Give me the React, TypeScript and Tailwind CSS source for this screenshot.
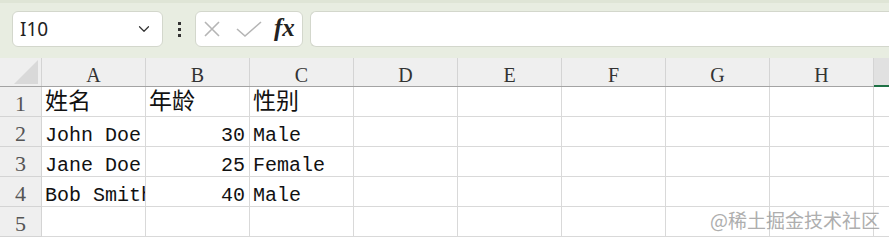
import { ChevronDown } from 'lucide-react';

const cols = ['A', 'B', 'C', 'D', 'E', 'F', 'G', 'H'];

type Cell = { text: string; align?: 'left' | 'right'; cjk?: boolean };

const rows: Cell[][] = [
  [{ text: '姓名', cjk: true }, { text: '年龄', cjk: true }, { text: '性别', cjk: true }],
  [{ text: 'John Doe' }, { text: '30', align: 'right' }, { text: 'Male' }],
  [{ text: 'Jane Doe' }, { text: '25', align: 'right' }, { text: 'Female' }],
  [{ text: 'Bob Smith' }, { text: '40', align: 'right' }, { text: 'Male' }],
  [],
];

const mono = { fontFamily: '"Liberation Mono", "Noto Sans CJK SC", monospace' };
const serif = { fontFamily: '"Liberation Serif", "Noto Sans CJK SC", serif' };

function Toolbar() {
  return (
    <div className="h-[58px] bg-[#e8ede1] border-t-[3px] border-[#dfe5d6] flex items-start pt-[8px]">
      {/* name box */}
      <div className="ml-[12px] w-[151px] h-[36px] rounded-md border border-[#d3d7cc] bg-white flex items-center justify-between pl-[7px] pr-[9px]">
        <span className="text-[19px] text-[#222]" style={{ fontFamily: '"Noto Sans", sans-serif' }}>I10</span>
        <ChevronDown size={18} strokeWidth={1.6} className="text-[#333]" />
      </div>
      {/* dots */}
      <div className="w-[32px] h-[36px] flex flex-col items-center justify-center gap-[3px]">
        <span className="w-[3px] h-[3px] bg-[#333]" />
        <span className="w-[3px] h-[3px] bg-[#333]" />
        <span className="w-[3px] h-[3px] bg-[#333]" />
      </div>
      {/* buttons */}
      <div className="w-[108px] h-[36px] rounded-md border border-[#d3d7cc] bg-white flex items-center pl-[7px]">
        <svg width="18" height="18" viewBox="0 0 18 18" className="mr-[15px]">
          <path d="M2 2 L16 16 M16 2 L2 16" stroke="#b5b5b5" strokeWidth="1.6" fill="none" />
        </svg>
        <svg width="26" height="18" viewBox="0 0 26 18" className="mr-[12px]">
          <path d="M1 9 L9 16 L25 2" stroke="#b5b5b5" strokeWidth="1.6" fill="none" />
        </svg>
        <span className="text-[25px] italic font-semibold text-[#222] leading-none -mt-[3px]" style={{ fontFamily: '"Liberation Serif", serif' }}>fx</span>
      </div>
      {/* formula bar */}
      <div className="ml-[7px] flex-1 h-[36px] rounded-l-md border border-r-0 border-[#d3d7cc] bg-white" />
    </div>
  );
}

function HeaderRow() {
  return (
    <div className="flex h-[29px] bg-[#efefef] border-b border-[#a3a3a3]">
      <div className="w-[42px] shrink-0 border-r border-[#d4d4d4] relative">
        <svg width="24" height="24" viewBox="0 0 24 24" className="absolute right-[3px] bottom-[2px]">
          <path d="M24 0 L24 24 L0 24 Z" fill="#d9d9d9" />
        </svg>
      </div>
      {cols.map((c) => (
        <div
          key={c}
          className="w-[104px] shrink-0 border-r border-[#d4d4d4] flex items-center justify-center text-[20px] text-[#333] pt-[5px]"
          style={serif}
        >
          {c}
        </div>
      ))}
      <div className="flex-1 bg-[#e1e1e1] border-b-2 border-[#1e7145] -mb-[1px]" />
    </div>
  );
}

function GridRow({ n, cells }: { n: number; cells: Cell[] }) {
  return (
    <div className="flex h-[30px]">
      <div
        className="w-[42px] shrink-0 bg-[#efefef] border-r border-b border-[#d4d4d4] flex items-end justify-center pb-[1px] text-[22px] text-[#555] leading-none"
        style={serif}
      >
        <span>{n}</span>
      </div>
      {cols.map((c, i) => {
        const cell = cells[i];
        return (
          <div
            key={c}
            className={`w-[104px] shrink-0 border-r border-b border-[#d9d9d9] flex items-end overflow-hidden whitespace-nowrap leading-none text-[#111] ${
              cell?.align === 'right' ? 'justify-end pr-[4px]' : 'justify-start pl-[3px]'
            } ${cell?.cjk ? 'text-[23px] pb-[1px]' : 'text-[20px] pb-[0px]'}`}
            style={mono}
          >
            {cell?.text}
          </div>
        );
      })}
      <div className="flex-1 border-b border-[#d9d9d9]" />
    </div>
  );
}

export default function App() {
  return (
    <div className="w-[889px] h-[240px] overflow-hidden bg-white relative">
      <Toolbar />
      <HeaderRow />
      {rows.map((r, i) => (
        <GridRow key={i} n={i + 1} cells={r} />
      ))}
      {/* watermark */}
      <div
        className="absolute right-[9px] bottom-[6px] text-[19px] text-[#9a9a9a] opacity-80"
        style={{ fontFamily: '"Noto Sans CJK SC", sans-serif' }}
      >
        @稀土掘金技术社区
      </div>
    </div>
  );
}
